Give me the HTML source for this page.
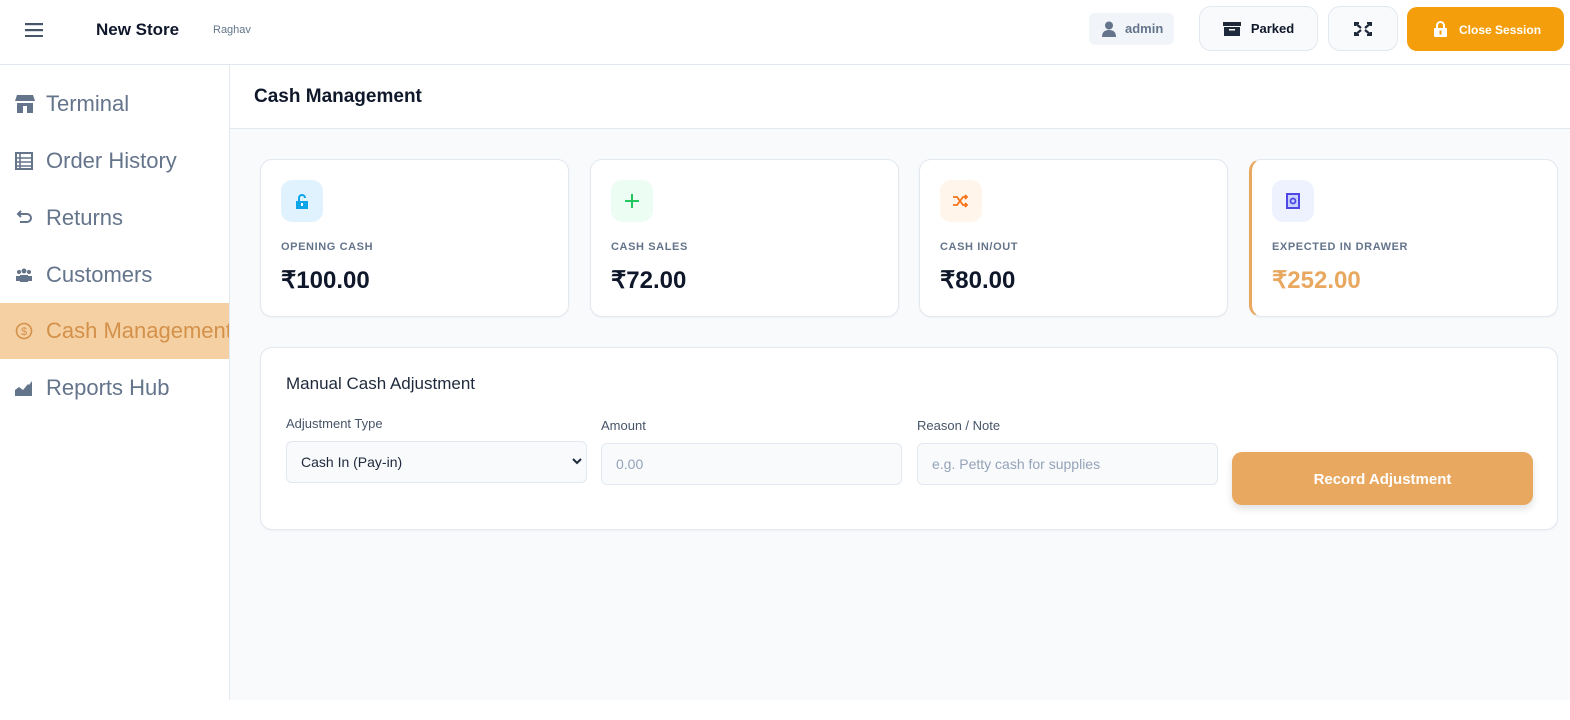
<!DOCTYPE html>
<html><head><meta charset="utf-8"><style>
*{box-sizing:border-box;margin:0;padding:0}
body{width:1570px;height:720px;background:#fff;font-family:"Liberation Sans",sans-serif;position:relative;overflow:hidden;color:#1e293b}
.hdr{position:absolute;left:0;top:0;width:1570px;height:65px;border-bottom:1px solid #e2e8f0;background:#fff}
.side{position:absolute;left:0;top:65px;width:230px;height:635px;border-right:1px solid #e2e8f0;background:#fff;overflow:hidden}
.main{position:absolute;left:230px;top:65px;width:1340px;height:635px;background:#f8fafc}
.tbar{height:64px;background:#fff;border-bottom:1px solid #e2e8f0;padding-left:24px;font-weight:bold;font-size:19px;line-height:64px;color:#0f172a}
.nav{position:absolute;left:0;width:229px;height:56px;display:flex;align-items:center;font-size:22px;color:#64748b;overflow:hidden}
.nav svg{position:absolute;left:15px}
.nav span{position:absolute;left:46px;white-space:nowrap}
.card{position:absolute;top:94px;width:309px;height:158px;background:#fff;border:1px solid #e2e8f0;border-radius:12px;box-shadow:0 1px 2px rgba(0,0,0,.04)}
.ic{position:absolute;left:20px;top:20px;width:42px;height:42px;border-radius:11px;display:flex;align-items:center;justify-content:center}
.lbl{position:absolute;left:20px;top:81px;font-size:11px;font-weight:bold;letter-spacing:.6px;color:#64748b}
.val{position:absolute;left:20px;top:106px;font-size:24px;font-weight:bold;color:#0f172a}
.btn{position:absolute;top:6px;height:45px;border:1px solid #e2e8f0;border-radius:12px;background:#f8fafc;display:flex;align-items:center;justify-content:center;font-size:13px;font-weight:bold}
.fl{position:absolute;font-size:13px;color:#475569}
.inp{position:absolute;top:95px;height:42px;width:301px;border:1px solid #e2e8f0;border-radius:6px;background:#f8fafc;font-size:14px;padding-left:14px;line-height:40px;color:#94a3b8}
</style></head><body>
<div class="hdr">
<svg style="position:absolute;left:25px;top:23px" width="18" height="14"><rect y="0" width="18" height="2.2" fill="#475569"/><rect y="6" width="18" height="2.2" fill="#475569"/><rect y="12" width="18" height="2.2" fill="#475569"/></svg>
<div style="position:absolute;left:96px;top:20px;font-size:17px;font-weight:bold;color:#0f172a">New Store</div>
<div style="position:absolute;left:213px;top:24px;font-size:11px;color:#64748b">Raghav</div>
<div style="position:absolute;left:1089px;top:13px;width:85px;height:32px;background:#f1f5f9;border-radius:6px;font-size:13px;color:#64748b;font-weight:bold;line-height:32px;padding-left:36px">admin
<svg style="position:absolute;left:13px;top:8px" width="14" height="16" viewBox="0 0 14 16"><circle cx="7" cy="4.5" r="4" fill="#64748b"/><path d="M0 16 Q0 9 7 9 Q14 9 14 16Z" fill="#64748b"/></svg></div>
<div class="btn" style="left:1199px;width:119px;color:#0f172a"><svg width="18" height="14" style="margin-right:10px"><rect x="0" y="0" width="18" height="4" fill="#1e293b"/><rect x="1" y="5" width="16" height="9" fill="#1e293b"/><rect x="6" y="7" width="6" height="1.5" fill="#fff"/></svg>Parked</div>
<div class="btn" style="left:1328px;width:70px"><svg width="18" height="14" viewBox="0 0 18 14"><path d="M1 1l6 5M17 1l-6 5M1 13l6-5M17 13l-6-5" stroke="#1e293b" stroke-width="2.2"/><path d="M0 0h5v2H2v2H0zM18 0h-5v2h3v2h2zM0 14h5v-2H2v-2H0zM18 14h-5v-2h3v-2h2z" fill="#1e293b"/></svg></div>
<div style="position:absolute;left:1407px;top:7px;width:157px;height:44px;background:#f59e0b;border-radius:10px;color:#fff;font-size:12px;font-weight:bold;line-height:46px;padding-left:52px">Close Session
<svg style="position:absolute;left:27px;top:14px" width="13" height="16" viewBox="0 0 13 16"><path d="M3 7V4.5a3.5 3.5 0 0 1 7 0V7" stroke="#fff" stroke-width="2" fill="none"/><rect x="0" y="7" width="13" height="9" rx="1" fill="#fff"/><rect x="5.5" y="9.5" width="2" height="4" fill="#f59e0b"/></svg></div>
</div>
<div class="side">
<div class="nav" style="top:11px"><svg width="20" height="18" viewBox="0 0 20 18"><path d="M2 0h16l2 6H0z" fill="#64748b"/><rect x="2" y="8" width="16" height="10" fill="#64748b"/><rect x="8" y="11" width="4" height="7" fill="#fff"/></svg><span>Terminal</span></div>
<div class="nav" style="top:68px"><svg width="18" height="18" viewBox="0 0 18 18"><rect x="1" y="1" width="16" height="16" stroke="#64748b" stroke-width="2" fill="none"/><path d="M1 6h16M1 10h16M1 14h16M5 1v16" stroke="#64748b" stroke-width="1.6"/></svg><span>Order History</span></div>
<div class="nav" style="top:125px"><svg width="18" height="16" viewBox="0 0 18 16"><path d="M4 4h8a4 4 0 0 1 0 8H5M6 1L3 4l3 3" stroke="#64748b" stroke-width="2" fill="none"/></svg><span>Returns</span></div>
<div class="nav" style="top:182px"><svg width="18" height="16" viewBox="0 0 18 16"><circle cx="4" cy="5" r="2" fill="#64748b"/><circle cx="14" cy="5" r="2" fill="#64748b"/><circle cx="9" cy="4" r="2.5" fill="#64748b"/><path d="M1 14v-5h6v5zM11 14v-5h6v5zM5 15v-7h8v7z" fill="#64748b"/></svg><span>Customers</span></div>
<div class="nav" style="top:238px;background:#f5d0a3;color:#d4914a"><svg width="18" height="18" viewBox="0 0 18 18"><circle cx="9" cy="9" r="7.5" stroke="#d4914a" stroke-width="1.6" fill="none"/><text x="9" y="13" font-size="11" text-anchor="middle" fill="#d4914a" font-family="Liberation Sans">$</text></svg><span>Cash Management</span></div>
<div class="nav" style="top:295px"><svg width="18" height="16" viewBox="0 0 18 16"><path d="M0 16V10l4-3 4 3 5-6 1 1 3-4v15z" fill="#64748b"/></svg><span>Reports Hub</span></div>
</div>
<div class="main">
<div class="tbar">Cash Management</div>
<div class="card" style="left:30px"><div class="ic" style="background:#e0f2fe"><svg width="12" height="15" viewBox="0 0 12 15"><path d="M3 7V4a3 3 0 0 1 6 0" stroke="#0ea5e9" stroke-width="2" fill="none"/><rect x="0" y="7" width="12" height="8" fill="#0ea5e9"/><rect x="5" y="9" width="2" height="3" fill="#fff"/></svg></div><div class="lbl">OPENING CASH</div><div class="val">₹100.00</div></div>
<div class="card" style="left:360px"><div class="ic" style="background:#ecfdf3"><svg width="14" height="14"><path d="M7 0v14M0 7h14" stroke="#22c55e" stroke-width="2"/></svg></div><div class="lbl">CASH SALES</div><div class="val">₹72.00</div></div>
<div class="card" style="left:689px"><div class="ic" style="background:#fff5eb"><svg width="16" height="14" viewBox="0 0 16 14"><path d="M0 3h4l6 8h4M0 11h4l6-8h4M12 1l2 2-2 2M12 9l2 2-2 2" stroke="#f97316" stroke-width="1.8" fill="none"/></svg></div><div class="lbl">CASH IN/OUT</div><div class="val">₹80.00</div></div>
<div class="card" style="left:1019px;border-left:3px solid #e8a860"><div class="ic" style="background:#eef2ff"><svg width="14" height="16" viewBox="0 0 14 16"><rect x="1" y="1" width="12" height="14" stroke="#4f46e5" stroke-width="2" fill="#c7d2fe"/><circle cx="7" cy="8" r="2.5" stroke="#4f46e5" stroke-width="1.8" fill="none"/></svg></div><div class="lbl">EXPECTED IN DRAWER</div><div class="val" style="color:#e8a860">₹252.00</div></div>
<div class="card" style="left:30px;top:282px;width:1298px;height:183px">
<div style="position:absolute;left:25px;top:26px;font-size:17px;color:#1e293b">Manual Cash Adjustment</div>
<div class="fl" style="left:25px;top:68px">Adjustment Type</div>
<div class="fl" style="left:340px;top:70px">Amount</div>
<div class="fl" style="left:656px;top:70px">Reason / Note</div>
<div class="inp" style="left:25px;top:93px;color:#1e293b">Cash In (Pay-in)<svg style="position:absolute;right:4px;top:16px" width="10" height="7"><path d="M1 1l4 4 4-4" stroke="#1e293b" stroke-width="2" fill="none"/></svg></div>
<div class="inp" style="left:340px">0.00</div>
<div class="inp" style="left:656px">e.g. Petty cash for supplies</div>
<div style="position:absolute;left:971px;top:104px;width:301px;height:53px;border-radius:10px;background:#e8a860;color:#fff;font-size:15px;font-weight:bold;text-align:center;line-height:55px;box-shadow:0 4px 8px rgba(0,0,0,.12)">Record Adjustment</div>
</div>
</div>
</body></html>
